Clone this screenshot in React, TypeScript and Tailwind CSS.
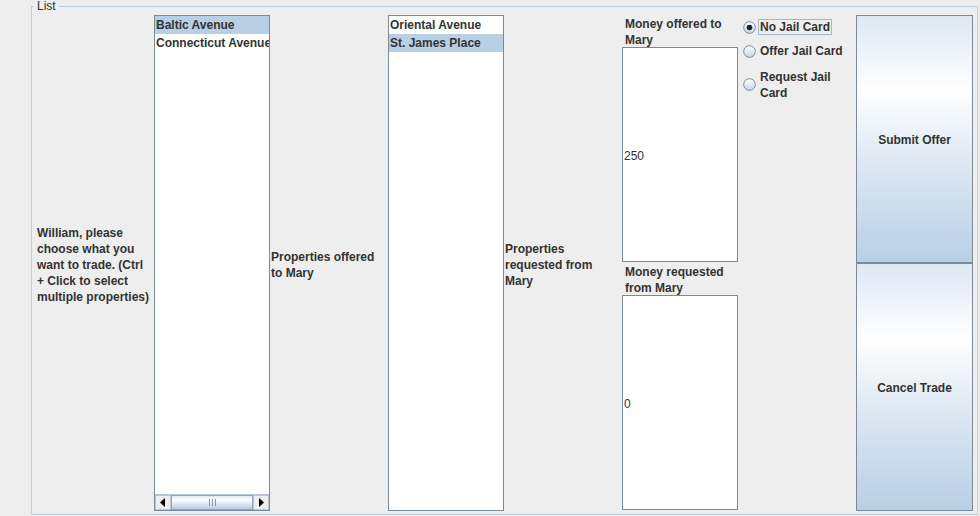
import React from "react";

const ink = "text-[#333333]";

function ListBox({ items, selected, scroll }: { items: string[]; selected: number; scroll?: boolean }) {
  return (
    <div className="w-[116px] h-[496px] border border-[#7a8a99] bg-white flex flex-col overflow-hidden">
      <div className="flex-1 flex flex-col">
        {items.map((item, i) => (
          <div
            key={item}
            className={`h-[18px] leading-[17px] pt-[1px] pl-[1px] whitespace-nowrap font-bold text-[12px] ${ink} ${
              i === selected ? "bg-[#b8cfe5]" : ""
            }`}
          >
            {item}
          </div>
        ))}
      </div>
      {scroll && <ScrollBar />}
    </div>
  );
}

function Arrow({ dir }: { dir: "left" | "right" }) {
  return (
    <div className="w-[16px] h-full bg-[#eeeeee] border border-[#b8c4d0] flex items-center justify-center">
      <svg width="6" height="9" viewBox="0 0 6 9">
        {dir === "left" ? <path d="M5 0 L0 4.5 L5 9 Z" fill="#000" /> : <path d="M1 0 L6 4.5 L1 9 Z" fill="#000" />}
      </svg>
    </div>
  );
}

function ScrollBar() {
  return (
    <div className="h-[16px] flex border-t border-[#b8c4d0] bg-[#eeeeee]">
      <Arrow dir="left" />
      <div className="flex-1 border border-[#8aa4d6] bg-[linear-gradient(to_bottom,#dde8f3_0%,#ffffff_30%,#dde8f3_60%,#b8cfe5_100%)] flex items-center justify-center gap-[2px]">
        <div className="w-[1px] h-[7px] bg-[#7f95b5]" />
        <div className="w-[1px] h-[7px] bg-[#7f95b5]" />
        <div className="w-[1px] h-[7px] bg-[#7f95b5]" />
      </div>
      <Arrow dir="right" />
    </div>
  );
}

function Radio({ checked }: { checked?: boolean }) {
  return (
    <svg width="13" height="13" viewBox="0 0 13 13" className="shrink-0">
      <defs>
        <linearGradient id={checked ? "rg1" : "rg0"} x1="0" y1="0" x2="0" y2="1">
          <stop offset="0" stopColor="#ffffff" />
          <stop offset="1" stopColor="#c5d6e8" />
        </linearGradient>
      </defs>
      <circle cx="6.5" cy="6.5" r="5.8" fill={`url(#${checked ? "rg1" : "rg0"})`} stroke="#7a8a99" strokeWidth="1" />
      {checked && <circle cx="6.5" cy="6.5" r="2.8" fill="#222222" />}
    </svg>
  );
}

function TextArea({ value }: { value: string }) {
  return (
    <div className="h-[215px] w-[116px] border border-[#7a8a99] bg-white flex items-center pl-[1px] pt-[2px]">
      <span className={`text-[12px] ${ink}`}>{value}</span>
    </div>
  );
}

const btn =
  "h-[248px] w-[117px] pt-[2px] border border-[#7a8a99] bg-[linear-gradient(to_bottom,#dde8f3_0%,#ffffff_30%,#dde8f3_60%,#b8cfe5_100%)] flex items-center justify-center font-bold text-[12px] text-[#333333]";

export default function App() {
  return (
    <div className="w-[980px] h-[516px] bg-[#eeeeee] pl-[31px] pr-[2px] font-['Liberation_Sans',Arial,sans-serif] text-[12px]">
      <fieldset className="h-[515px] border border-[#b8cfe5] pr-[4px]">
        <legend className={`ml-[2px] px-[3px] leading-[12px] text-[12px] ${ink}`}>List</legend>
        <div className="flex pt-[3px] h-[500px] items-stretch">
          <div className={`w-[122px] pl-[5px] pt-[2px] flex items-center font-bold leading-[16px] ${ink}`}>
            <div>
              William, please
              <br />
              choose what you
              <br />
              want to trade. (Ctrl
              <br />+ Click to select
              <br />
              multiple properties)
            </div>
          </div>
          <div>
            <ListBox items={["Baltic Avenue", "Connecticut Avenue"]} selected={0} scroll />
          </div>
          <div className={`w-[118px] pl-[1px] pt-[2px] flex items-center font-bold leading-[16px] ${ink}`}>
            <div>
              Properties offered
              <br />
              to Mary
            </div>
          </div>
          <div>
            <ListBox items={["Oriental Avenue", "St. James Place"]} selected={1} />
          </div>
          <div className={`w-[118px] pl-[1px] pt-[2px] flex items-center font-bold leading-[16px] ${ink}`}>
            <div>
              Properties
              <br />
              requested from
              <br />
              Mary
            </div>
          </div>
          <div className="w-[117px] flex flex-col">
            <div className={`h-[32px] pl-[3px] pt-[1px] font-bold leading-[16px] ${ink}`}>
              Money offered to
              <br />
              Mary
            </div>
            <TextArea value="250" />
            <div className={`h-[33px] pl-[3px] pt-[2px] font-bold leading-[16px] ${ink}`}>
              Money requested
              <br />
              from Mary
            </div>
            <TextArea value="0" />
          </div>
          <div className={`w-[117px] flex flex-col font-bold leading-[16px] ${ink}`}>
            <div className="flex items-center py-[4px] pl-[4px] gap-[2px]">
              <Radio checked />
              <span className="border border-[#a3b8cc] px-[1px] pt-[1px] leading-[13px]">No Jail Card</span>
            </div>
            <div className="flex items-center py-[4px] pl-[4px] gap-[2px]">
              <Radio />
              <span className="border border-transparent px-[1px] pt-[1px] leading-[13px]">Offer Jail Card</span>
            </div>
            <div className="flex items-center py-[4px] pl-[4px] gap-[2px]">
              <Radio />
              <span className="border border-transparent px-[1px] pt-[1px]">
                Request Jail
                <br />
                Card
              </span>
            </div>
          </div>
          <div className="flex flex-col">
            <div className={btn}>Submit Offer</div>
            <div className={btn}>Cancel Trade</div>
          </div>
        </div>
      </fieldset>
    </div>
  );
}
